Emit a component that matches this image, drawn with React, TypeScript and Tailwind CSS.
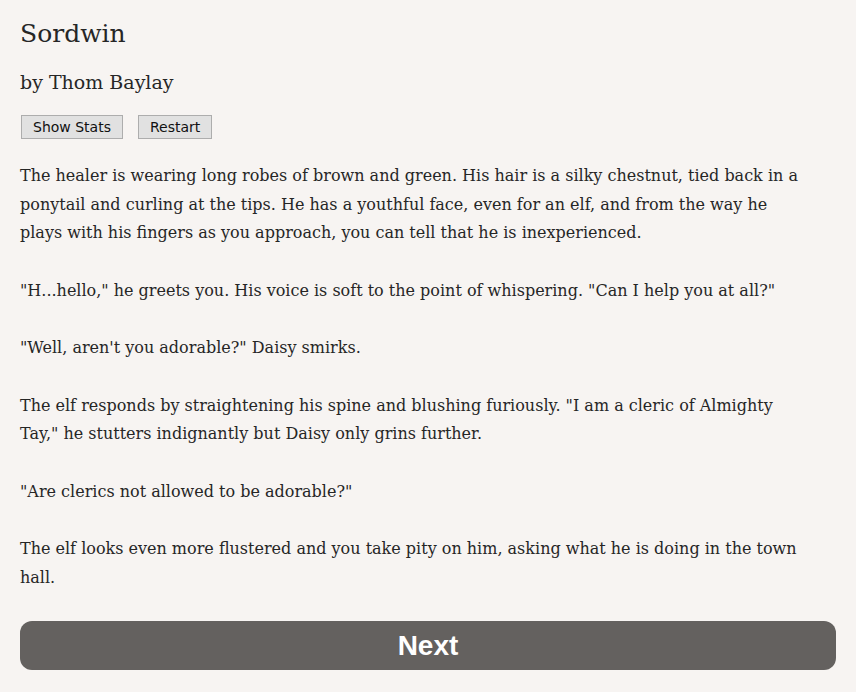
const paragraphs: string[][] = [
  [
    "The healer is wearing long robes of brown and green. His hair is a silky chestnut, tied back in a",
    "ponytail and curling at the tips. He has a youthful face, even for an elf, and from the way he",
    "plays with his fingers as you approach, you can tell that he is inexperienced.",
  ],
  ['"H...hello," he greets you. His voice is soft to the point of whispering. "Can I help you at all?"'],
  ['"Well, aren\'t you adorable?" Daisy smirks.'],
  [
    'The elf responds by straightening his spine and blushing furiously. "I am a cleric of Almighty',
    'Tay," he stutters indignantly but Daisy only grins further.',
  ],
  ['"Are clerics not allowed to be adorable?"'],
  [
    "The elf looks even more flustered and you take pity on him, asking what he is doing in the town",
    "hall.",
  ],
]

function App() {
  return (
    <div className="min-h-[692px] bg-[#f7f4f2] px-5 pt-[16px] text-[#262626] font-['DejaVu_Serif',serif]">
      <h1 className="text-[25px] leading-[36px]">Sordwin</h1>
      <h2 className="mt-[16px] text-[19px] leading-[28px]">by Thom Baylay</h2>

      <div className="mt-[19px] flex gap-[15px] pl-px font-['DejaVu_Sans',sans-serif] text-[14px] text-[#111]">
        <button className="h-6 border border-[#adadad] bg-[#e1e1e1] px-[11px]">Show Stats</button>
        <button className="h-6 border border-[#adadad] bg-[#e1e1e1] px-[11px]">Restart</button>
      </div>

      <div className="mt-[23px] flex flex-col gap-[28.7px] text-[16px] leading-[28.7px]">
        {paragraphs.map((lines, i) => (
          <p key={i}>
            {lines.map((line, j) => (
              <span key={j} className="block whitespace-nowrap">
                {line}
              </span>
            ))}
          </p>
        ))}
      </div>

      <button className="mt-[29px] h-[49px] w-full rounded-xl bg-[#64615f] font-['Liberation_Sans',sans-serif] text-[28px] font-bold text-white">
        Next
      </button>
    </div>
  )
}

export default App
